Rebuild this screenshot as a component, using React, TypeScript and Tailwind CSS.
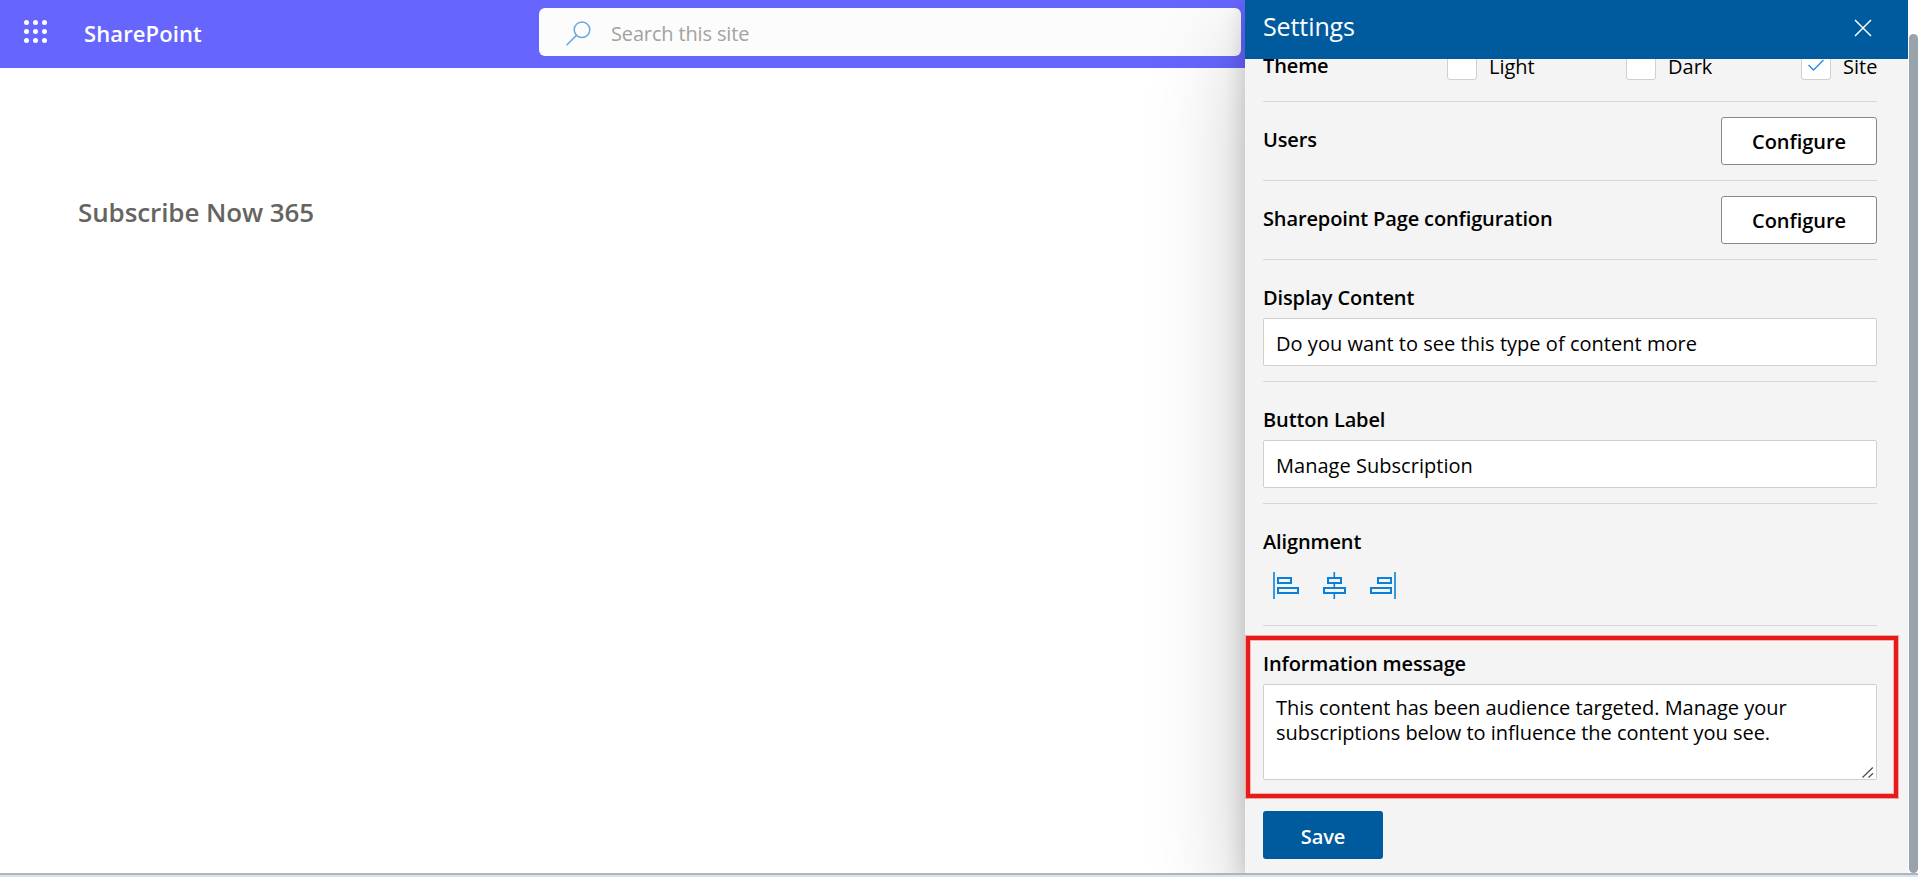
import type { ReactNode } from "react";

const LAUNCHER_OFFSETS = [2.5, 11.5, 20.5];

function AppLauncherIcon() {
  return (
    <svg className="h-[23px] w-[23px]" viewBox="0 0 23 23" fill="white">
      {LAUNCHER_OFFSETS.map((y) =>
        LAUNCHER_OFFSETS.map((x) => <circle key={`${x}-${y}`} cx={x} cy={y} r="2.5" />),
      )}
    </svg>
  );
}

function SearchIcon() {
  return (
    <svg className="h-[25px] w-[25px]" viewBox="0 0 25 25" fill="none" stroke="#69a8de" strokeWidth="1.5">
      <circle cx="16" cy="8.8" r="7.8" />
      <path d="M10.4 14.4 0.5 24.3" />
    </svg>
  );
}

function CloseIcon() {
  return (
    <svg className="h-[18px] w-[18px]" viewBox="0 0 18 18" fill="none" stroke="white" strokeWidth="1.5">
      <path d="M1 1 17 17M17 1 1 17" />
    </svg>
  );
}

function AlignLeftIcon() {
  return (
    <svg className="h-7 w-[26px]" viewBox="0 0 26 28" fill="none" stroke="#0b80d8" strokeWidth="2">
      <path d="M1 0V27" strokeWidth="1.6" />
      <path d="M5 6H18V11H5ZM5 16H25V21H5Z" />
    </svg>
  );
}

function AlignCenterIcon() {
  return (
    <svg className="h-7 w-[23px]" viewBox="0 0 23 28" fill="none" stroke="#0b80d8" strokeWidth="2">
      <path d="M11.3 0V5M11.3 12V16M11.3 22V27" strokeWidth="1.6" />
      <path d="M5 6H18V11H5ZM1 16H22V21H1Z" />
    </svg>
  );
}

function AlignRightIcon() {
  return (
    <svg className="h-7 w-[26px]" viewBox="0 0 26 28" fill="none" stroke="#0b80d8" strokeWidth="2">
      <path d="M25 0V27" strokeWidth="1.6" />
      <path d="M8 6H21V11H8ZM1 16H21V21H1Z" />
    </svg>
  );
}

function ThemeOption({ label, checked, className }: { label: string; checked?: boolean; className: string }) {
  return (
    <div className={`flex shrink-0 items-start gap-[12px] ${className}`}>
      <span className="flex h-[30px] w-[30px] shrink-0 items-center justify-center rounded-[3px] border border-[#d2d0ce] bg-white">
        {checked && (
          <svg className="h-3 w-4" viewBox="0 0 16 12" fill="none" stroke="#2b88d8" strokeWidth="1.3">
            <path d="M0.5 6 5.5 11 15.5 1" />
          </svg>
        )}
      </span>
      <span className="mt-[4px] text-[20px] leading-[26px]">{label}</span>
    </div>
  );
}

function Label({ children, className = "" }: { children: ReactNode; className?: string }) {
  return (
    <div className={`text-[20px] leading-[26px] font-semibold tracking-[-0.13px] whitespace-nowrap ${className}`}>
      {children}
    </div>
  );
}

function ConfigureRow({ label }: { label: string }) {
  return (
    <div className="flex h-[79px] items-start justify-between border-b border-[#d8d8d8] pt-[15px]">
      <Label className="mt-[10px]">{label}</Label>
      <button className="h-12 w-[156px] rounded-[3px] border border-[#8a8886] bg-white pt-[2px] text-[20px] font-semibold tracking-[-0.05px]">
        Configure
      </button>
    </div>
  );
}

function FieldRow({ label, children }: { label: string; children: ReactNode }) {
  return (
    <div className="h-[122px] border-b border-[#d8d8d8] pt-[25px]">
      <Label>{label}</Label>
      {children}
    </div>
  );
}

function TextBox({ value }: { value: string }) {
  return (
    <div className="mt-[7px] flex h-12 items-center rounded-[2px] border border-[#d0cfce] bg-white pt-[3px] pl-3 text-[20px] tracking-[0.03px] whitespace-nowrap">
      {value}
    </div>
  );
}

function SettingsPanel() {
  return (
    <aside className="absolute top-0 right-[10px] flex h-[873px] w-[663px] flex-col bg-[#f4f4f4] text-black shadow-[0_40px_90px_rgba(0,0,0,0.22),0_8px_22px_rgba(0,0,0,0.18)]">
      <header className="flex h-[59px] shrink-0 items-center justify-between bg-[#005a9e] pr-[36px] pb-[3px] pl-[18px] text-white">
        <h2 className="-mt-[3px] text-[25px] tracking-[-0.1px]">Settings</h2>
        <CloseIcon />
      </header>
      <div className="min-h-0 flex-1 overflow-hidden pr-[31px] pl-[18px]">
        <div className="flex h-[43px] items-start overflow-hidden border-b border-[#d8d8d8]">
          <div className="-mt-[9px] flex w-full items-start">
            <Label className="mt-[3px] w-[184px]">Theme</Label>
            <ThemeOption label="Light" className="w-[179px]" />
            <ThemeOption label="Dark" className="w-[175px]" />
            <ThemeOption label="Site" checked className="w-[76px]" />
          </div>
        </div>
        <ConfigureRow label="Users" />
        <ConfigureRow label="Sharepoint Page configuration" />
        <FieldRow label="Display Content">
          <TextBox value="Do you want to see this type of content more" />
        </FieldRow>
        <FieldRow label="Button Label">
          <TextBox value="Manage Subscription" />
        </FieldRow>
        <FieldRow label="Alignment">
          <div className="mt-[17px] flex gap-[24px] pl-[10px]">
            <AlignLeftIcon />
            <AlignCenterIcon />
            <AlignRightIcon />
          </div>
        </FieldRow>
        <section className="mt-[10px] -ml-[17px] h-[162px] w-[652px] border-[4px] border-[#e81b1b] pt-[11px] pl-[13px] shadow-[0_0_0_1px_rgba(232,27,27,0.35),inset_0_0_0_1px_rgba(232,27,27,0.3)]">
          <Label className="tracking-[-0.2px]">Information message</Label>
          <div className="mt-[7px] flex h-24 w-[614px] items-start justify-between rounded-[2px] border border-[#d0cfce] bg-white pt-[10px] pr-[2px] pb-[1px] pl-3">
            <p className="text-[20px] leading-[25px] tracking-[-0.03px] whitespace-nowrap">
              This content has been audience targeted. Manage your
              <br />
              subscriptions below to influence the content you see.
            </p>
            <svg className="h-[11px] w-[12px] self-end" viewBox="0 0 12 11" fill="none" stroke="#505050" strokeWidth="1.3">
              <path d="M0.5 10.5 10.8 0.5M6.5 10.5 11 6.3" />
            </svg>
          </div>
        </section>
        <button className="mt-[13px] block h-12 w-[120px] rounded-[3px] bg-[#005a9e] pt-[3px] text-[20px] font-semibold tracking-[-0.1px] text-white">
          Save
        </button>
      </div>
    </aside>
  );
}

export default function App() {
  return (
    <div className="relative flex h-[877px] w-[1918px] flex-col overflow-hidden bg-white font-['Open_Sans',sans-serif]">
      <header className="flex h-[68px] shrink-0 items-start bg-[#6666ff] pl-6">
        <div className="mt-5">
          <AppLauncherIcon />
        </div>
        <span className="mt-[17px] ml-[37px] w-[455px] text-[22px] leading-8 font-semibold tracking-[0.1px] text-white">
          SharePoint
        </span>
        <div className="mt-2 flex h-12 w-[702px] items-center gap-[20px] rounded-[6px] bg-[#fcfcfc] pl-[27px]">
          <div className="pt-[3px]">
            <SearchIcon />
          </div>
          <span className="pt-[3px] text-[20px] tracking-[-0.15px] text-[#a3a2a0]">Search this site</span>
        </div>
      </header>
      <main className="flex-1 pt-[128px] pl-[78px]">
        <h1 className="text-[26px] leading-8 font-semibold tracking-[-0.1px] text-[#666461]">Subscribe Now 365</h1>
      </main>
      <SettingsPanel />
      <div className="absolute top-0 right-0 flex h-[873px] w-[10px] flex-col items-end bg-white pt-[34px]">
        <div className="w-[9px] flex-1 rounded-[5px] bg-[#98a3ac]" />
      </div>
      <footer className="relative h-1 shrink-0 border-t-2 border-[#adb5bd] bg-[#d9e3ef]" />
    </div>
  );
}
